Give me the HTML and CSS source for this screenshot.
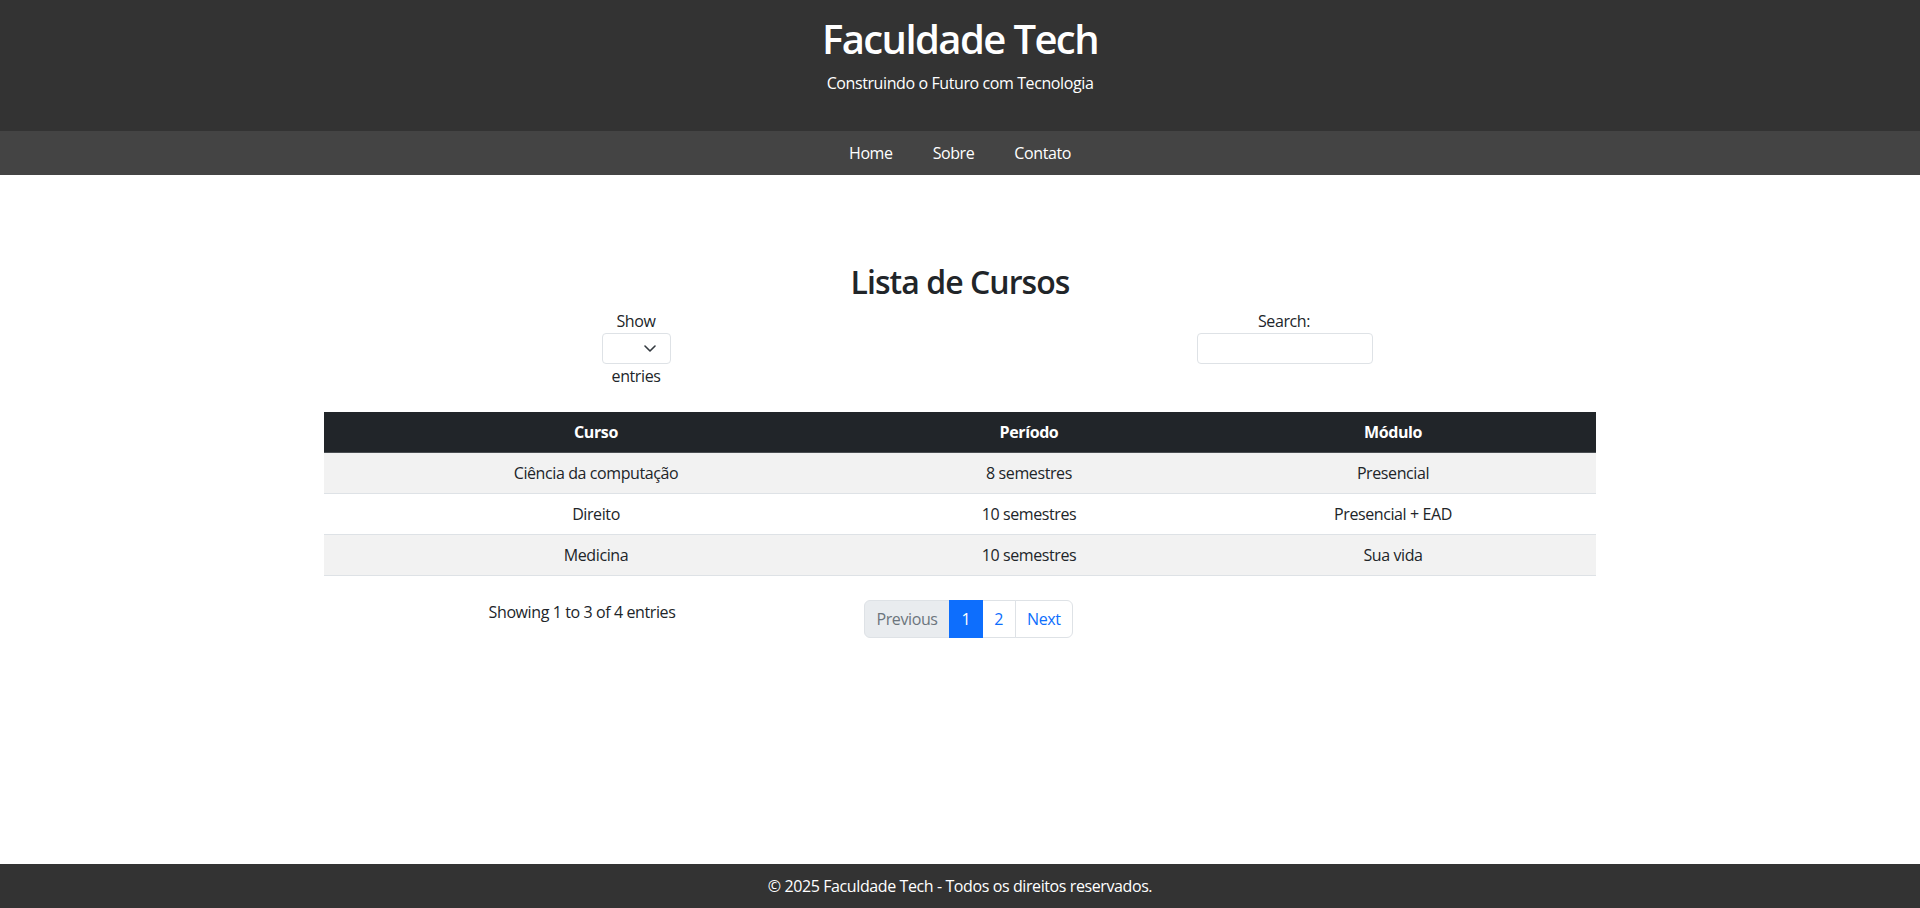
FILE: index.html
```html
<!DOCTYPE html>
<html lang="pt-BR">
<head>
<meta charset="utf-8">
<title>Faculdade Tech</title>
<link rel="stylesheet" href="styles.css">
</head>
<body>
<header class="site-header">
  <h1 class="site-title">Faculdade Tech</h1>
  <p class="site-tagline">Construindo o Futuro com Tecnologia</p>
</header>
<nav class="site-nav">
  <a href="#" class="nav-link">Home</a>
  <a href="#" class="nav-link">Sobre</a>
  <a href="#" class="nav-link">Contato</a>
</nav>
<main class="content">
  <div class="container">
    <h2 class="page-title">Lista de Cursos</h2>
    <div class="dt-row dt-top">
      <div class="dt-col dt-col-6">
        <label class="dt-length">
          <span class="dt-label">Show</span>
          <span class="length-select">
            <svg class="chevron" width="12" height="7" viewBox="0 0 12 7"><polyline points="1,1 6,6 11,1" fill="none" stroke="#343a40" stroke-width="1.6" stroke-linecap="round" stroke-linejoin="round"/></svg>
          </span>
          <span class="dt-label">entries</span>
        </label>
      </div>
      <div class="dt-col dt-col-6">
        <label class="dt-search">
          <span class="dt-label">Search:</span>
          <input type="search" class="search-input">
        </label>
      </div>
    </div>
    <div class="dt-row">
      <div class="dt-col dt-col-12">
        <table class="course-table">
          <colgroup>
            <col class="col-curso">
            <col class="col-periodo">
            <col class="col-modulo">
          </colgroup>
          <thead>
            <tr><th>Curso</th><th>Período</th><th>Módulo</th></tr>
          </thead>
          <tbody>
            <tr class="odd"><td>Ciência da computação</td><td>8 semestres</td><td>Presencial</td></tr>
            <tr class="even"><td>Direito</td><td>10 semestres</td><td>Presencial + EAD</td></tr>
            <tr class="odd"><td>Medicina</td><td>10 semestres</td><td>Sua vida</td></tr>
          </tbody>
        </table>
      </div>
    </div>
    <div class="dt-row dt-bottom">
      <div class="dt-col dt-col-5">
        <div class="dt-info">Showing 1 to 3 of 4 entries</div>
      </div>
      <div class="dt-col dt-col-7">
        <ul class="pagination">
          <li class="page-item disabled"><a class="page-link" href="#">Previous</a></li>
          <li class="page-item active"><a class="page-link" href="#">1</a></li>
          <li class="page-item"><a class="page-link" href="#">2</a></li>
          <li class="page-item"><a class="page-link" href="#">Next</a></li>
        </ul>
      </div>
    </div>
  </div>
</main>
<footer class="site-footer">
  <p class="footer-text">© 2025 Faculdade Tech - Todos os direitos reservados.</p>
</footer>
</body>
</html>
```
FILE: styles.css
```css
* { box-sizing: border-box; }

html, body { margin: 0; padding: 0; }

body {
  font-family: "Open Sans", "Noto Sans", "Liberation Sans", sans-serif;
  font-size: 16px;
  line-height: 24px;
  letter-spacing: -0.025em;
  color: #212529;
  background: #fff;
  text-align: center;
  min-height: 100vh;
  display: flex;
  flex-direction: column;
}

.site-header {
  background: #333333;
  color: #fff;
  padding: 15px 0 36px;
}

.site-title {
  margin: 0 0 8px;
  font-size: 40px;
  line-height: 48px;
  font-weight: 600;
  letter-spacing: -0.04em;
}

.site-tagline {
  margin: 0;
  font-size: 16px;
  line-height: 24px;
}

.site-nav {
  background: #444444;
  padding: 10px 0;
  display: flex;
  justify-content: center;
  gap: 40px;
}

.nav-link {
  color: #fff;
  text-decoration: none;
}

.content {
  flex: 1;
  padding-top: 88px;
}

.container {
  width: 1296px;
  margin: 0 auto;
}

.page-title {
  margin: 0 0 8px;
  font-size: 32px;
  line-height: 38.4px;
  font-weight: 600;
  letter-spacing: -0.03em;
}

.dt-row {
  display: flex;
}

.dt-col { padding: 0 12px; }
.dt-col-6 { width: 50%; }
.dt-col-12 { width: 100%; }
.dt-col-5 { width: 41.6667%; }
.dt-col-7 { width: 58.3333%; }

.dt-length,
.dt-search {
  display: flex;
  flex-direction: column;
  align-items: center;
}

.length-select {
  display: flex;
  align-items: center;
  justify-content: flex-end;
  width: 69px;
  height: 31px;
  border: 1px solid #dee2e6;
  border-radius: 4px;
  background: #fff;
  padding-right: 14px;
}

.chevron { display: block; }

.search-input {
  display: block;
  width: 176px;
  height: 31px;
  margin: 0 0 0 2px;
  border: 1px solid #dee2e6;
  border-radius: 4px;
  background: #fff;
  font: inherit;
  padding: 4px 8px;
}

.course-table {
  width: 100%;
  margin-top: 24px;
  border-collapse: collapse;
  table-layout: fixed;
}

.col-curso { width: 544px; }
.col-periodo { width: 322px; }
.col-modulo { width: 406px; }

.course-table th {
  background: #212529;
  color: #fff;
  font-weight: 700;
  padding: 8px;
  border-bottom: 1px solid #4a4e52;
}

.course-table td {
  padding: 8px;
  border-bottom: 1px solid #dee2e6;
}

.course-table tr.odd td { background: #f2f2f2; }
.course-table tr.even td { background: #fff; }

.dt-bottom { margin-top: 24px; }

.dt-info { text-align: center; }

.pagination {
  display: flex;
  margin: 0;
  padding: 0;
  list-style: none;
}

.page-link {
  display: block;
  padding: 6px 11.5px;
  border: 1px solid #dee2e6;
  margin-left: -1px;
  color: #0d6efd;
  background: #fff;
  text-decoration: none;
}

.page-item:first-child .page-link {
  margin-left: 0;
  border-radius: 6px 0 0 6px;
}

.page-item:last-child .page-link {
  border-radius: 0 6px 6px 0;
}

.page-item.disabled .page-link {
  color: #6c757d;
  background: #e9ecef;
}

.page-item.active .page-link {
  color: #fff;
  background: #0d6efd;
  border-color: #0d6efd;
  position: relative;
}

.site-footer {
  background: #333333;
  color: #fff;
  padding: 10px 0;
}

.footer-text { margin: 0; }
```
